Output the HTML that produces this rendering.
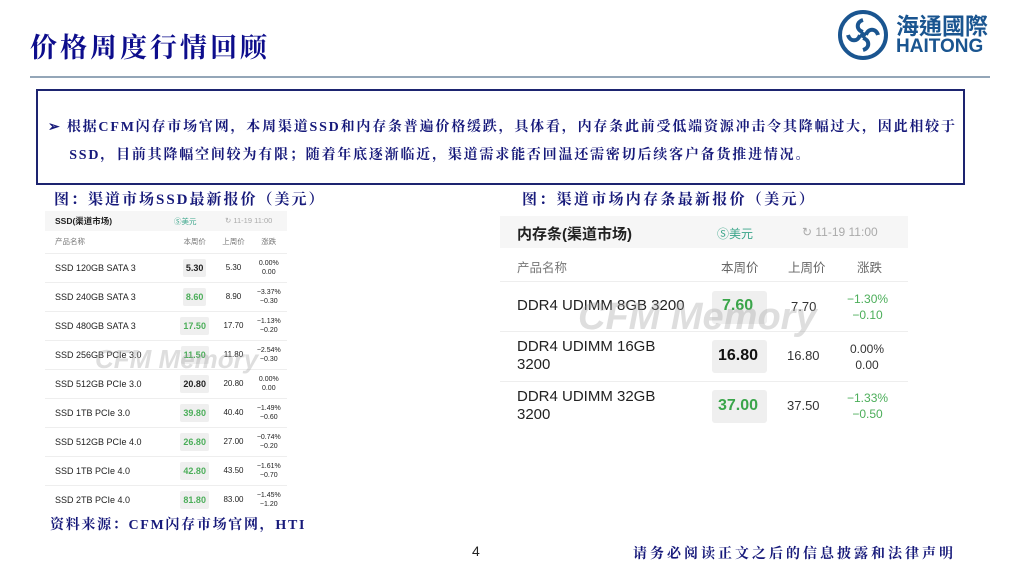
<!DOCTYPE html>
<html><head><meta charset="utf-8"><style>
*{margin:0;padding:0;box-sizing:border-box}
body{width:1024px;height:576px;background:#fff;position:relative;overflow:hidden;font-family:"Liberation Sans","Noto Sans CJK SC",sans-serif}
.a{position:absolute;white-space:nowrap}
.k{font-family:"Liberation Serif","Noto Serif CJK SC",serif;font-weight:bold;color:#16197a}
.t1 td{font-size:9px;color:#222;height:29px;border-top:1px solid #eee}
.pb{display:inline-block;background:#efefef;border-radius:2px;padding:4px 3px;font-weight:bold}
.g{color:#3aa54a}.gs{color:#4cae5a}
</style></head><body>
<div class="a k" style="left:30px;top:26px;font-size:27px;color:#0d0d8c;letter-spacing:3px">价格周度行情回顾</div>
<div class="a" style="left:30px;top:76px;width:960px;height:2px;background:#94a6b8"></div>
<!-- logo -->
<svg class="a" style="left:838px;top:10px" width="52" height="50" viewBox="0 0 52 50">
<circle cx="25" cy="25" r="23" fill="none" stroke="#1a5590" stroke-width="4"/>
<path d="M25 10 C18 12 18 20 25 22 M25 40 C32 38 32 30 25 28 M10 25 C12 32 20 32 22 25 M40 25 C38 18 30 18 28 25" fill="none" stroke="#1a5590" stroke-width="4"/>
<circle cx="25" cy="25" r="3" fill="#1a5590"/>
</svg>
<div class="a" style="left:896px;top:11px;font-size:23px;font-weight:bold;color:#1a5590;font-family:'Noto Sans CJK TC',sans-serif;line-height:27px;letter-spacing:0px">海通國際</div>
<div class="a" style="left:896px;top:37px;font-size:19px;font-weight:bold;color:#1a5590;line-height:20px">HAITONG</div>
<!-- box -->
<div class="a" style="left:36px;top:89px;width:929px;height:96px;border:2.5px solid #1d2470"></div>
<div class="a k" style="left:48px;top:114px;font-size:14px;line-height:28px;letter-spacing:1.8px">➢ 根据CFM闪存市场官网，本周渠道SSD和内存条普遍价格缓跌，具体看，内存条此前受低端资源冲击令其降幅过大，因此相较于<br>&nbsp;&nbsp;&nbsp;&nbsp;SSD，目前其降幅空间较为有限；随着年底逐渐临近，渠道需求能否回温还需密切后续客户备货推进情况。</div>
<div class="a k" style="left:54px;top:188px;font-size:15px;letter-spacing:2px">图：渠道市场SSD最新报价（美元）</div>
<div class="a k" style="left:522px;top:188px;font-size:15px;letter-spacing:2.3px">图：渠道市场内存条最新报价（美元）</div>
<!-- left table -->
<div class="a" style="left:45px;top:211px;width:242px;height:20px;background:#f6f6f6"></div>
<div class="a" style="left:55px;top:215px;font-size:8.5px;font-weight:bold;color:#222">SSD(渠道市场)</div>
<div class="a" style="left:174px;top:216px;font-size:7.5px;color:#3aa58a">Ⓢ美元</div>
<div class="a" style="left:225px;top:216px;font-size:7.5px;color:#aaa">↻ 11-19 11:00</div>
<table class="a" style="left:45px;top:231px;width:242px;border-collapse:collapse">
<tr style="font-size:7.5px;color:#777;height:22px"><td style="padding-left:10px">产品名称</td><td style="text-align:center">本周价</td><td style="text-align:center">上周价</td><td style="text-align:center">涨跌</td></tr>
<tbody class="t1">
<tr><td style="padding-left:10px;width:128px">SSD 120GB SATA 3</td><td align="center"><span class="pb" style="color:#222">5.30</span></td><td align="center" style="font-size:8px">5.30</td><td align="center" style="font-size:7px;line-height:9px">0.00%<br>0.00</td></tr>
<tr><td style="padding-left:10px">SSD 240GB SATA 3</td><td align="center"><span class="pb gs">8.60</span></td><td align="center" style="font-size:8px">8.90</td><td align="center" class="gs" style="font-size:7px;line-height:9px">−3.37%<br>−0.30</td></tr>
<tr><td style="padding-left:10px">SSD 480GB SATA 3</td><td align="center"><span class="pb gs">17.50</span></td><td align="center" style="font-size:8px">17.70</td><td align="center" class="gs" style="font-size:7px;line-height:9px">−1.13%<br>−0.20</td></tr>
<tr><td style="padding-left:10px">SSD 256GB PCIe 3.0</td><td align="center"><span class="pb gs">11.50</span></td><td align="center" style="font-size:8px">11.80</td><td align="center" class="gs" style="font-size:7px;line-height:9px">−2.54%<br>−0.30</td></tr>
<tr><td style="padding-left:10px">SSD 512GB PCIe 3.0</td><td align="center"><span class="pb" style="color:#222">20.80</span></td><td align="center" style="font-size:8px">20.80</td><td align="center" style="font-size:7px;line-height:9px">0.00%<br>0.00</td></tr>
<tr><td style="padding-left:10px">SSD 1TB PCIe 3.0</td><td align="center"><span class="pb gs">39.80</span></td><td align="center" style="font-size:8px">40.40</td><td align="center" class="gs" style="font-size:7px;line-height:9px">−1.49%<br>−0.60</td></tr>
<tr><td style="padding-left:10px">SSD 512GB PCIe 4.0</td><td align="center"><span class="pb gs">26.80</span></td><td align="center" style="font-size:8px">27.00</td><td align="center" class="gs" style="font-size:7px;line-height:9px">−0.74%<br>−0.20</td></tr>
<tr><td style="padding-left:10px">SSD 1TB PCIe 4.0</td><td align="center"><span class="pb gs">42.80</span></td><td align="center" style="font-size:8px">43.50</td><td align="center" class="gs" style="font-size:7px;line-height:9px">−1.61%<br>−0.70</td></tr>
<tr><td style="padding-left:10px">SSD 2TB PCIe 4.0</td><td align="center"><span class="pb gs">81.80</span></td><td align="center" style="font-size:8px">83.00</td><td align="center" class="gs" style="font-size:7px;line-height:9px">−1.45%<br>−1.20</td></tr>
</tbody></table>
<div class="a" style="left:95px;top:344px;font-size:26px;font-weight:bold;font-style:italic;color:rgba(160,160,160,0.35)">CFM Memory</div>
<!-- right table -->
<div class="a" style="left:500px;top:216px;width:408px;height:32px;background:#f6f6f6"></div>
<div class="a" style="left:517px;top:223px;font-size:15px;font-weight:bold;color:#222">内存条(渠道市场)</div>
<div class="a" style="left:717px;top:225px;font-size:12px;color:#3aa58a">Ⓢ美元</div>
<div class="a" style="left:802px;top:225px;font-size:12px;color:#aaa">↻ 11-19 11:00</div>
<div class="a" style="left:517px;top:257px;font-size:12.5px;color:#777">产品名称</div>
<div class="a" style="left:721px;top:257px;font-size:12.5px;color:#666">本周价</div>
<div class="a" style="left:788px;top:257px;font-size:12.5px;color:#666">上周价</div>
<div class="a" style="left:857px;top:257px;font-size:12.5px;color:#666">涨跌</div>
<div class="a" style="left:500px;top:281px;width:408px;height:1px;background:#eee"></div>
<div class="a" style="left:500px;top:331px;width:408px;height:1px;background:#eee"></div>
<div class="a" style="left:500px;top:381px;width:408px;height:1px;background:#eee"></div>
<div class="a" style="left:712px;top:291px;width:55px;height:33px;background:#efefef;border-radius:3px"></div>
<div class="a" style="left:712px;top:340px;width:55px;height:33px;background:#efefef;border-radius:3px"></div>
<div class="a" style="left:712px;top:390px;width:55px;height:33px;background:#efefef;border-radius:3px"></div>
<div class="a" style="left:517px;top:297px;font-size:15px;color:#222">DDR4 UDIMM 8GB 3200</div>
<div class="a" style="left:517px;top:338px;font-size:15px;color:#222;line-height:18px">DDR4 UDIMM 16GB<br>3200</div>
<div class="a" style="left:517px;top:388px;font-size:15px;color:#222;line-height:18px">DDR4 UDIMM 32GB<br>3200</div>
<div class="a g" style="left:722px;top:297px;font-size:16px;font-weight:bold">7.60</div>
<div class="a" style="left:718px;top:347px;font-size:16px;font-weight:bold;color:#111">16.80</div>
<div class="a g" style="left:718px;top:397px;font-size:16px;font-weight:bold">37.00</div>
<div class="a" style="left:791px;top:299px;font-size:13px;color:#333">7.70</div>
<div class="a" style="left:787px;top:348px;font-size:13px;color:#333">16.80</div>
<div class="a" style="left:787px;top:398px;font-size:13px;color:#333">37.50</div>
<div class="a gs" style="left:847px;top:291px;font-size:12px;line-height:16px;text-align:center">−1.30%<br>−0.10</div>
<div class="a" style="left:850px;top:341px;font-size:12px;line-height:16px;text-align:center;color:#333">0.00%<br>0.00</div>
<div class="a gs" style="left:847px;top:390px;font-size:12px;line-height:16px;text-align:center">−1.33%<br>−0.50</div>
<div class="a" style="left:578px;top:296px;font-size:38px;font-weight:bold;font-style:italic;color:rgba(160,160,160,0.35)">CFM Memory</div>
<!-- footer -->
<div class="a k" style="left:50px;top:514px;font-size:14px;letter-spacing:1.7px">资料来源：CFM闪存市场官网，HTI</div>
<div class="a" style="left:472px;top:543px;font-size:14px;color:#222">4</div>
<div class="a k" style="left:633px;top:543px;font-size:14px;letter-spacing:3px">请务必阅读正文之后的信息披露和法律声明</div>
</body></html>
